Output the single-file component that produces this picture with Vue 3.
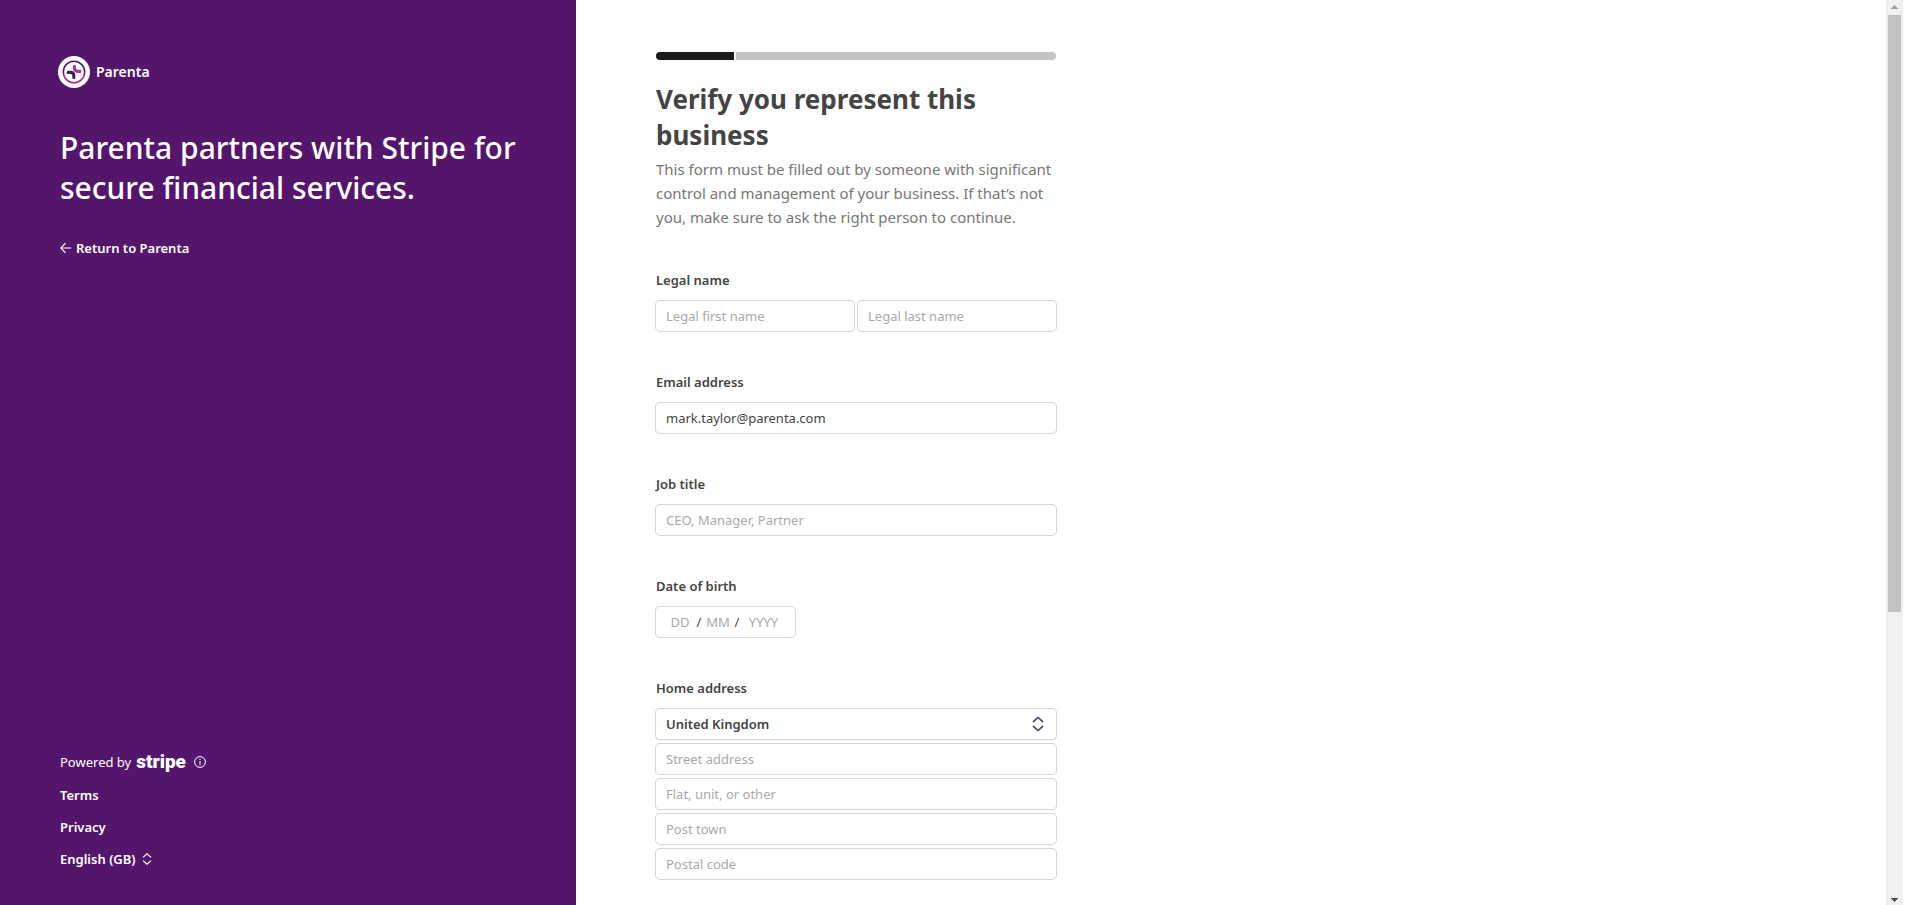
<script setup>
import { ref } from 'vue'

const firstName = ref('')
const lastName = ref('')
const email = ref('mark.taylor@parenta.com')
const jobTitle = ref('')
const birth = ref({ day: '', month: '', year: '' })
const country = ref('United Kingdom')
const addressLines = ref([
  { id: 'street', placeholder: 'Street address', value: '' },
  { id: 'flat', placeholder: 'Flat, unit, or other', value: '' },
  { id: 'town', placeholder: 'Post town', value: '' },
  { id: 'postcode', placeholder: 'Postal code', value: '' },
])
</script>

<template>
  <div class="page">
    <aside class="sidebar">
      <div class="brand">
        <svg class="brand-mark" viewBox="0 0 32 32" aria-hidden="true">
          <defs>
            <linearGradient id="ring" x1="0" y1="0" x2="0" y2="1">
              <stop offset="0.25" stop-color="#4b1c66" />
              <stop offset="0.8" stop-color="#a92d95" />
            </linearGradient>
          </defs>
          <circle cx="16" cy="16" r="16" fill="#fff" />
          <circle cx="16" cy="16" r="10.7" fill="none" stroke="url(#ring)" stroke-width="1.6" />
          <g fill="none" stroke-linecap="round">
            <path d="M16.4 10.3v1.8q0 3.3 3.3 3.3h2.3" stroke="#a83793" stroke-width="3.1" />
            <path d="M10.2 16.4h2.4q3.2 0 3.2 3.2v2" stroke="#fff" stroke-width="4.4" />
            <path d="M10.2 16.4h2.4q3.2 0 3.2 3.2v2" stroke="#45195f" stroke-width="3.1" />
          </g>
        </svg>
        <span>Parenta</span>
      </div>

      <div class="intro">
        <h1>Parenta partners with Stripe for secure financial services.</h1>
        <a class="return" href="#">
          <svg class="arrow" viewBox="0 0 12 12" aria-hidden="true">
            <path d="M5.5 1.2L.8 6l4.7 4.8M.8 6H11.2" />
          </svg>
          <span>Return to Parenta</span>
        </a>
      </div>

      <footer class="footer">
        <div class="powered">
          <span>Powered by</span>
          <strong class="stripe">stripe</strong>
          <button class="info" type="button" aria-label="About Stripe">
            <svg viewBox="0 0 12 12" aria-hidden="true">
              <circle cx="6" cy="6" r="5.4" />
              <path d="M6 2.8v1.2M6 5v4.2" />
            </svg>
          </button>
        </div>
        <a href="#">Terms</a>
        <a href="#">Privacy</a>
        <button class="language" type="button">
          <span>English (GB)</span>
          <svg viewBox="0 0 10 12" aria-hidden="true">
            <path d="M1 4.4L5 .9l4 3.5M1 7.6l4 3.5 4-3.5" />
          </svg>
        </button>
      </footer>
    </aside>

    <main class="content">
      <form class="form" @submit.prevent>
        <div class="progress" role="progressbar" aria-label="Progress" aria-valuenow="20" aria-valuemin="0" aria-valuemax="100">
          <span class="done"></span>
          <span class="rest"></span>
        </div>

        <h2>Verify you represent this business</h2>
        <p class="lead">
          This form must be filled out by someone with significant control and management of your
          business. If that’s not you, make sure to ask the right person to continue.
        </p>

        <div class="fields">
          <fieldset>
            <legend>Legal name</legend>
            <div class="pair">
              <input v-model="firstName" class="box" type="text" aria-label="Legal first name" placeholder="Legal first name" />
              <input v-model="lastName" class="box" type="text" aria-label="Legal last name" placeholder="Legal last name" />
            </div>
          </fieldset>

          <div>
            <label for="email">Email address</label>
            <input id="email" v-model="email" class="box" type="email" />
          </div>

          <div>
            <label for="job">Job title</label>
            <input id="job" v-model="jobTitle" class="box" type="text" placeholder="CEO, Manager, Partner" />
          </div>

          <fieldset>
            <legend>Date of birth</legend>
            <div class="box date">
              <input v-model="birth.day" type="text" aria-label="Day" placeholder="DD" />
              <span>/</span>
              <input v-model="birth.month" type="text" aria-label="Month" placeholder="MM" />
              <span>/</span>
              <input v-model="birth.year" class="year" type="text" aria-label="Year" placeholder="YYYY" />
            </div>
          </fieldset>

          <fieldset>
            <legend>Home address</legend>
            <div class="stack">
              <div class="select">
                <select v-model="country" class="box" aria-label="Country">
                  <option>United Kingdom</option>
                </select>
                <svg viewBox="0 0 12 16" aria-hidden="true">
                  <path d="M1 6l5-4.6L11 6M1 10l5 4.6 5-4.6" />
                </svg>
              </div>
              <input
                v-for="line in addressLines"
                :key="line.id"
                v-model="line.value"
                class="box"
                type="text"
                :aria-label="line.placeholder"
                :placeholder="line.placeholder"
              />
            </div>
          </fieldset>
        </div>
      </form>
    </main>

    <div class="scrollbar" aria-hidden="true">
      <svg viewBox="0 0 17 15"><path d="M8 5h1v1h1v1h1v1h1v1H5V8h1V7h1V6h1z" fill="#a3a3a3" /></svg>
      <div class="track"><div class="thumb"></div></div>
      <svg viewBox="0 0 17 15"><path d="M5 8h7v1h-1v1h-1v1H9v1H8v-1H7v-1H6V9H5z" fill="#505050" /></svg>
    </div>
  </div>
</template>

<style>
body {
  margin: 0;
  background: #fff;
}
</style>

<style scoped>
.page {
  display: flex;
  min-height: 100vh;
  padding-right: 15px;
  box-sizing: border-box;
  background: #fff;
  color: #444;
  font-family: "Noto Sans", "Open Sans", sans-serif;
  font-size: 13px;
  line-height: 20px;
}

button,
input,
select {
  font: inherit;
  color: inherit;
}

button {
  padding: 0;
  border: 0;
  background: none;
  cursor: pointer;
}

.sidebar {
  display: flex;
  flex-direction: column;
  flex: 0 0 576px;
  box-sizing: border-box;
  padding: 56px 0 36px;
  background: #54166b;
  color: #fff;
}

.brand {
  display: flex;
  align-items: center;
  gap: 6px;
  padding: 0 58px;
  font-size: 14px;
  font-weight: 600;
}

.brand-mark {
  width: 32px;
  height: 32px;
}

.intro {
  padding: 40px 48px 0 60px;
}

h1 {
  margin: 0 0 30px;
  font-size: 30px;
  font-weight: 500;
  line-height: 40px;
}

a {
  color: inherit;
  font-weight: 600;
  text-decoration: none;
}

.return {
  display: inline-flex;
  align-items: center;
  gap: 4px;
}

.arrow {
  width: 12px;
  height: 12px;
  fill: none;
  stroke: #fff;
  stroke-width: 1.1;
}

.footer {
  display: flex;
  flex-direction: column;
  align-items: flex-start;
  gap: 12px;
  margin-top: auto;
  padding: 0 60px;
}

.powered {
  display: flex;
  align-items: center;
  line-height: 22px;
}

.stripe {
  margin: 0 8px 0 5px;
  font-family: Roboto, "Open Sans", sans-serif;
  font-size: 19px;
  font-weight: 900;
}

.info,
.info svg {
  display: block;
  width: 12px;
  height: 12px;
}

.info svg {
  fill: none;
  stroke: #fff;
  stroke-width: 1;
}

.language {
  display: flex;
  align-items: center;
  gap: 6px;
  font-weight: 600;
}

.language svg {
  width: 10px;
  height: 12px;
  fill: none;
  stroke: #fff;
  stroke-width: 1.2;
}

.content {
  flex: 1;
  min-width: 0;
  padding: 52px 80px 24px;
}

.form {
  max-width: 400px;
}

.progress {
  display: flex;
  gap: 2px;
  height: 8px;
  overflow: hidden;
  border-radius: 4px;
  background: #f0f0f0;
}

.done {
  flex: 0 0 78px;
  background: #1a1a1a;
}

.rest {
  flex: 1;
  background: #c4c4c4;
}

h2 {
  margin: 21px 0 4px;
  font-size: 26px;
  font-weight: 700;
  line-height: 36px;
}

.lead {
  margin: 0 0 41px;
  color: #767676;
  font-size: 15px;
  line-height: 24px;
}

.fields {
  display: flex;
  flex-direction: column;
  gap: 41px;
}

fieldset {
  min-width: 0;
  margin: 0;
  padding: 0;
  border: 0;
}

label,
legend {
  display: block;
  margin-bottom: 11px;
  padding: 0;
  font-weight: 600;
}

.box {
  display: block;
  width: 100%;
  height: 30px;
  box-sizing: border-box;
  padding: 0 10px;
  border: 0;
  border-radius: 4px;
  background: #fff;
  box-shadow: 0 0 0 1px #d6d6d6;
}

input::placeholder {
  color: #a9a9a9;
  opacity: 1;
}

.pair {
  display: grid;
  grid-template-columns: 1fr 1fr;
  gap: 4px;
}

.stack {
  display: grid;
  gap: 5px;
}

.date {
  display: flex;
  align-items: center;
  width: 139px;
  padding: 0 8px;
}

.date input {
  flex: 0 0 32px;
  width: 32px;
  padding: 0;
  border: 0;
  background: none;
  text-align: center;
}

.date .year {
  flex: 1 1 46px;
}

.date span {
  flex: 0 0 6px;
  text-align: center;
}

.select {
  position: relative;
}

.select select {
  appearance: none;
  font-weight: 600;
  box-shadow: 0 0 0 1px #d6d6d6, 0 1px 1px 0 #a4a4a4;
}

.select svg {
  position: absolute;
  top: 7px;
  right: 12px;
  width: 12px;
  height: 16px;
  fill: none;
  stroke: #4f566b;
  stroke-width: 1.8;
  pointer-events: none;
}

.scrollbar {
  display: flex;
  flex-direction: column;
  flex: 0 0 17px;
  background: #f0f0f0;
}

.scrollbar svg {
  display: block;
  width: 17px;
  height: 15px;
}

.track {
  flex: 1;
  padding: 0 2px;
}

.thumb {
  height: 68.2%;
  background: #c1c1c1;
}
</style>
